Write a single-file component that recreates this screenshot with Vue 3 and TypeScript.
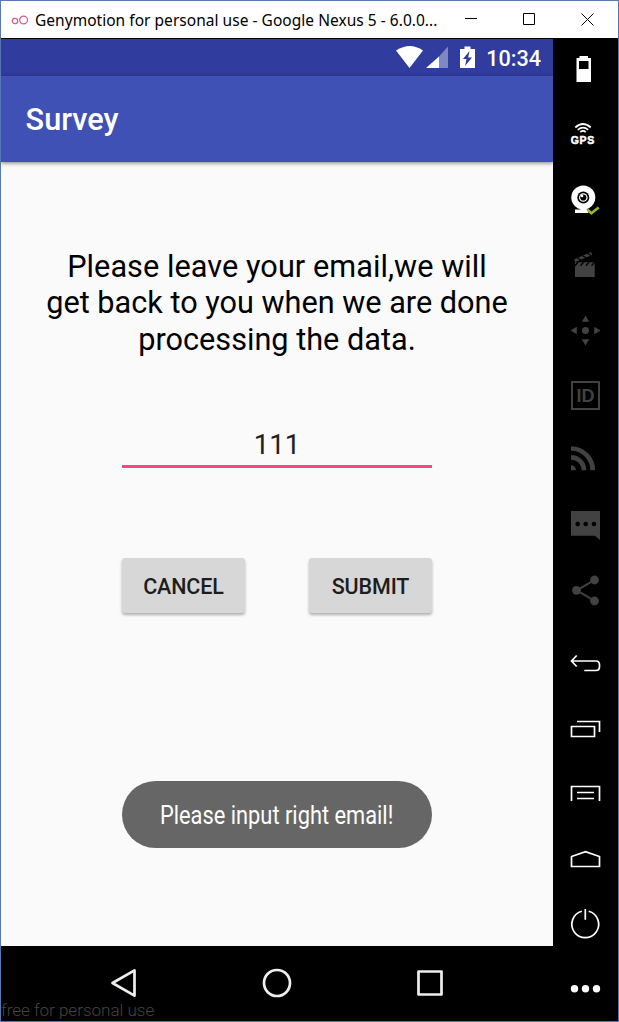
<script setup lang="ts">
import { ref } from 'vue'

const email = ref<string>('111')
const lines: string[] = ['Please leave your email,we will', 'get back to you when we are done', 'processing the data.']
</script>

<template>
  <div class="window">
    <header class="titlebar">
      <svg class="logo" width="18" height="14" viewBox="0 0 18 14">
        <circle cx="4" cy="8.000" r="2.700" /><circle cx="12.600" cy="7.000" r="3.900" />
      </svg>
      <span class="caption">Genymotion for personal use - Google Nexus 5 - 6.0.0...</span>
      <svg class="controls" width="154" height="37" viewBox="0 0 154 37">
        <path d="M1 17.500h12M59.500 12.500h11v11h-11zM117.500 12.500l12 12M129.500 12.500l-12 12" />
      </svg>
    </header>
    <div class="body">
      <main class="phone">
        <div class="status">
          <svg width="82" height="37" viewBox="0 0 82 37">
            <path class="w" d="M0 11.500Q14 2.500 27 11.500L13.500 29z" />
            <path class="w" d="M30 29L43 17.500V29z" />
            <path class="dim" d="M43 17.500L52 7.500V29h-9z" />
            <path class="w" fill-rule="evenodd" d="M68.500 7.500h6V10h4.500v19h-15V10h4.500zM73.500 12L67 20h3.500L69 27l7-8.500h-3.800z" />
          </svg>
          <span class="clock">10:34</span>
        </div>
        <div class="appbar"><h1>Survey</h1></div>
        <section class="content">
          <p class="message"><span v-for="(line, i) in lines" :key="i">{{ line }}</span></p>
          <div class="field">{{ email }}</div>
          <div class="buttons"><button>CANCEL</button><button>SUBMIT</button></div>
          <div class="toast"><span>Please input right email!</span></div>
        </section>
        <nav class="nav">
          <svg width="552" height="75" viewBox="0 0 552 75">
            <path d="M111.500 37L133.500 24.300V49.700z" />
            <circle cx="276" cy="37" r="13" />
            <rect x="417.500" y="25.500" width="23" height="23" />
          </svg>
          <span class="license">free for personal use</span>
        </nav>
      </main>
      <aside class="tools">
        <svg viewBox="0 0 65 65"><path class="w" fill-rule="evenodd" d="M26.500 18h8.500v2h3v24H23.500V20h3zM26 23v8h9.500v-8z" /></svg>
        <svg viewBox="0 0 65 65">
          <path class="line" d="M22.300 24.500Q30 17.500 37.700 24.500M24.800 26.800Q30 22.300 35.200 26.800M27.300 29Q30 26.700 32.700 29" />
          <text class="gps" x="17.700" y="40.800">GPS</text>
        </svg>
        <svg viewBox="0 0 65 65">
          <circle class="w" cx="30.300" cy="29.500" r="12" />
          <path class="w" d="M27.500 39h6v2.500h1.800V45H22v-3.500h5.500z" />
          <circle cx="30.300" cy="29.500" r="6" /><circle class="w" cx="30.300" cy="29.500" r="4.300" />
          <circle cx="30.300" cy="29.500" r="3.100" /><circle class="w" cx="29" cy="28" r="1.300" />
          <path class="check" d="M34.700 41.800L38.300 45.300L45.700 39.500" />
        </svg>
        <svg viewBox="0 0 65 65">
          <path class="g" d="M22 29.300h19.700V44H22zM21 26.500L38 19l1.300 3L22.300 29z" />
          <path class="cut" d="M22 32.700l3-3.400M27.500 32.700l3-3.400M33 32.700l3-3.400M38.500 32.700l3-3.400M24.500 25l3.500 2M29.500 22.700l3.500 2M34.500 20.500l3.500 2" />
        </svg>
        <svg viewBox="0 0 65 65">
          <circle class="g" cx="32.500" cy="32.500" r="3.500" />
          <path class="g" d="M32.500 17.500l3.700 6.300h-7.400zM32.500 47.500l3.700-6.300h-7.400zM17.500 32.500l6.300-3.700v7.400zM47.500 32.500l-6.300-3.700v7.400z" />
        </svg>
        <svg viewBox="0 0 65 65">
          <rect class="gline" x="19" y="19" width="27" height="27" />
          <text class="id" x="23.500" y="39" textLength="18" lengthAdjust="spacingAndGlyphs">ID</text>
        </svg>
        <svg viewBox="0 0 65 65">
          <path class="rss" d="M18 20.500a21.700 21.700 0 0 1 21.700 21.800M18 29.300a13 13 0 0 1 13 13" />
          <path class="g" d="M18 37.300a5 5 0 0 1 5 5h-5z" />
        </svg>
        <svg viewBox="0 0 65 65">
          <path class="g" d="M18 18h29v29l-5-4.200H18z" />
          <circle cx="24.700" cy="31" r="2.300" /><circle cx="32.700" cy="31" r="2.300" /><circle cx="41" cy="31" r="2.300" />
        </svg>
        <svg viewBox="0 0 65 65">
          <path class="gline" d="M41.700 22L23.700 32.300l18 10.500" />
          <circle class="g" cx="41.500" cy="22" r="4.400" /><circle class="g" cx="23.500" cy="32.300" r="4.400" /><circle class="g" cx="41.500" cy="43" r="4.400" />
        </svg>
        <svg class="gap" viewBox="0 0 65 65"><path class="line" d="M23.700 25.500l-5.200 5.500 5.200 5.500M19 31h24c2.500 0 3.500 1.500 3.500 4v1.500c0 2.500-1 4-3.500 4H31.300" /></svg>
        <svg viewBox="0 0 65 65"><path class="line" d="M18.500 31.500h23v10h-23zM24 26.500h22.500v10.500" /></svg>
        <svg viewBox="0 0 65 65"><path class="line" d="M18.500 41V26.500h28V41M24 32.500h17M24 38.500h17" /></svg>
        <svg viewBox="0 0 65 65"><path class="line" d="M18.500 41.500v-10l14-4.800 14 4.800v10z" /></svg>
        <svg viewBox="0 0 65 65"><path class="line" d="M28.800 21.300a13.400 13.400 0 1 0 6.900 0M32.300 19v10.700" /></svg>
        <svg viewBox="0 0 65 65"><circle class="w" cx="21.500" cy="33.700" r="3.700" /><circle class="w" cx="32.500" cy="33.700" r="3.700" /><circle class="w" cx="43.500" cy="33.700" r="3.700" /></svg>
      </aside>
    </div>
  </div>
</template>

<style>
body { margin: 0; background: #000; }
</style>

<style scoped>
.window { box-sizing: border-box; width: 619px; height: 1022px; border: 1px solid #5579ae; background: #000; overflow: hidden; font-family: Roboto, sans-serif; }
svg { display: block; flex: none; }
.w { fill: #fff; }
.titlebar { height: 37px; background: #fff; display: flex; align-items: center; }
.logo { margin-left: 10px; fill: none; stroke: #d5608a; stroke-width: 1.3; }
.caption { margin-left: 6px; width: 402px; font: 15.5px/36px "Noto Sans", sans-serif; color: #000; white-space: nowrap; letter-spacing: 0.03px; }
.controls { margin-left: 27px; fill: none; stroke: #000; stroke-width: 1; }
.body { display: flex; height: 983px; }
.phone { width: 552px; display: flex; flex-direction: column; padding-top: 1px; }
.status { height: 37px; background: #303c9e; display: flex; justify-content: flex-end; padding-right: 12px; }
.dim { fill: #7f87c4; }
.clock { margin-left: 8px; font-size: 21.6px; line-height: 39px; font-weight: 500; color: #fff; }
.appbar { height: 86px; background: #3f51b5; display: flex; align-items: center; padding-left: 24.6px; box-shadow: 0 1px 4px rgba(0, 0, 0, .5); z-index: 1; }
h1 { margin: 2px 0 0; font-size: 30.67px; font-weight: 500; color: #fff; line-height: 36px; }
.content { height: 784px; background: #fafafa; display: flex; flex-direction: column; align-items: center; }
.message { margin: 87px 0 0; font-size: 30.67px; line-height: 36.3px; color: #000; text-align: center; }
.message span { display: block; white-space: nowrap; }
.message span:first-child { letter-spacing: 0.06px; }
.field { margin-top: 69px; width: 310px; height: 38px; border-bottom: 3px solid #fb4683; font-size: 27.6px; line-height: 36px; text-align: center; color: #212121; }
.buttons { margin-top: 90px; width: 310px; display: flex; justify-content: space-between; }
button { width: 123px; height: 55px; border: 0; border-radius: 3px; padding: 2px 0 0; background: #d7d7d7; color: #1d1d1d; font: 500 21.5px/53px Roboto, sans-serif; letter-spacing: -0.1px; box-shadow: 0 2px 3px rgba(0, 0, 0, .3); }
.toast { margin-top: 168px; width: 310px; height: 67px; border-radius: 34px; background: #666; color: #fff; display: flex; align-items: center; justify-content: center; }
.toast span { font-size: 25px; line-height: 40px; padding-top: 3px; white-space: nowrap; transform: scaleX(.873); }
.nav { position: relative; height: 75px; background: #000; }
.nav svg { fill: none; stroke: #eee; stroke-width: 2.7; stroke-linejoin: round; }
.license { position: absolute; left: 0; bottom: 0; font-size: 17.1px; line-height: 21px; font-weight: 300; color: #444; white-space: nowrap; letter-spacing: -0.04px; }
.tools { width: 65px; }
.tools svg { width: 65px; height: 65px; }
.tools .gap { margin-top: 7px; }
.line { fill: none; stroke: #fff; stroke-width: 1.7; }
.g { fill: #424242; }
.gline { fill: none; stroke: #424242; stroke-width: 2; }
.rss { fill: none; stroke: #424242; stroke-width: 4.7; }
.cut { fill: none; stroke: #000; stroke-width: 1.3; }
.check { fill: none; stroke: #93b72c; stroke-width: 2.6; }
.gps { font: bold 10.5px "Liberation Sans", sans-serif; fill: #fff; stroke: #fff; stroke-width: .5; letter-spacing: .7px; }
.id { font: bold 18px "Liberation Sans", sans-serif; fill: #424242; }
</style>
